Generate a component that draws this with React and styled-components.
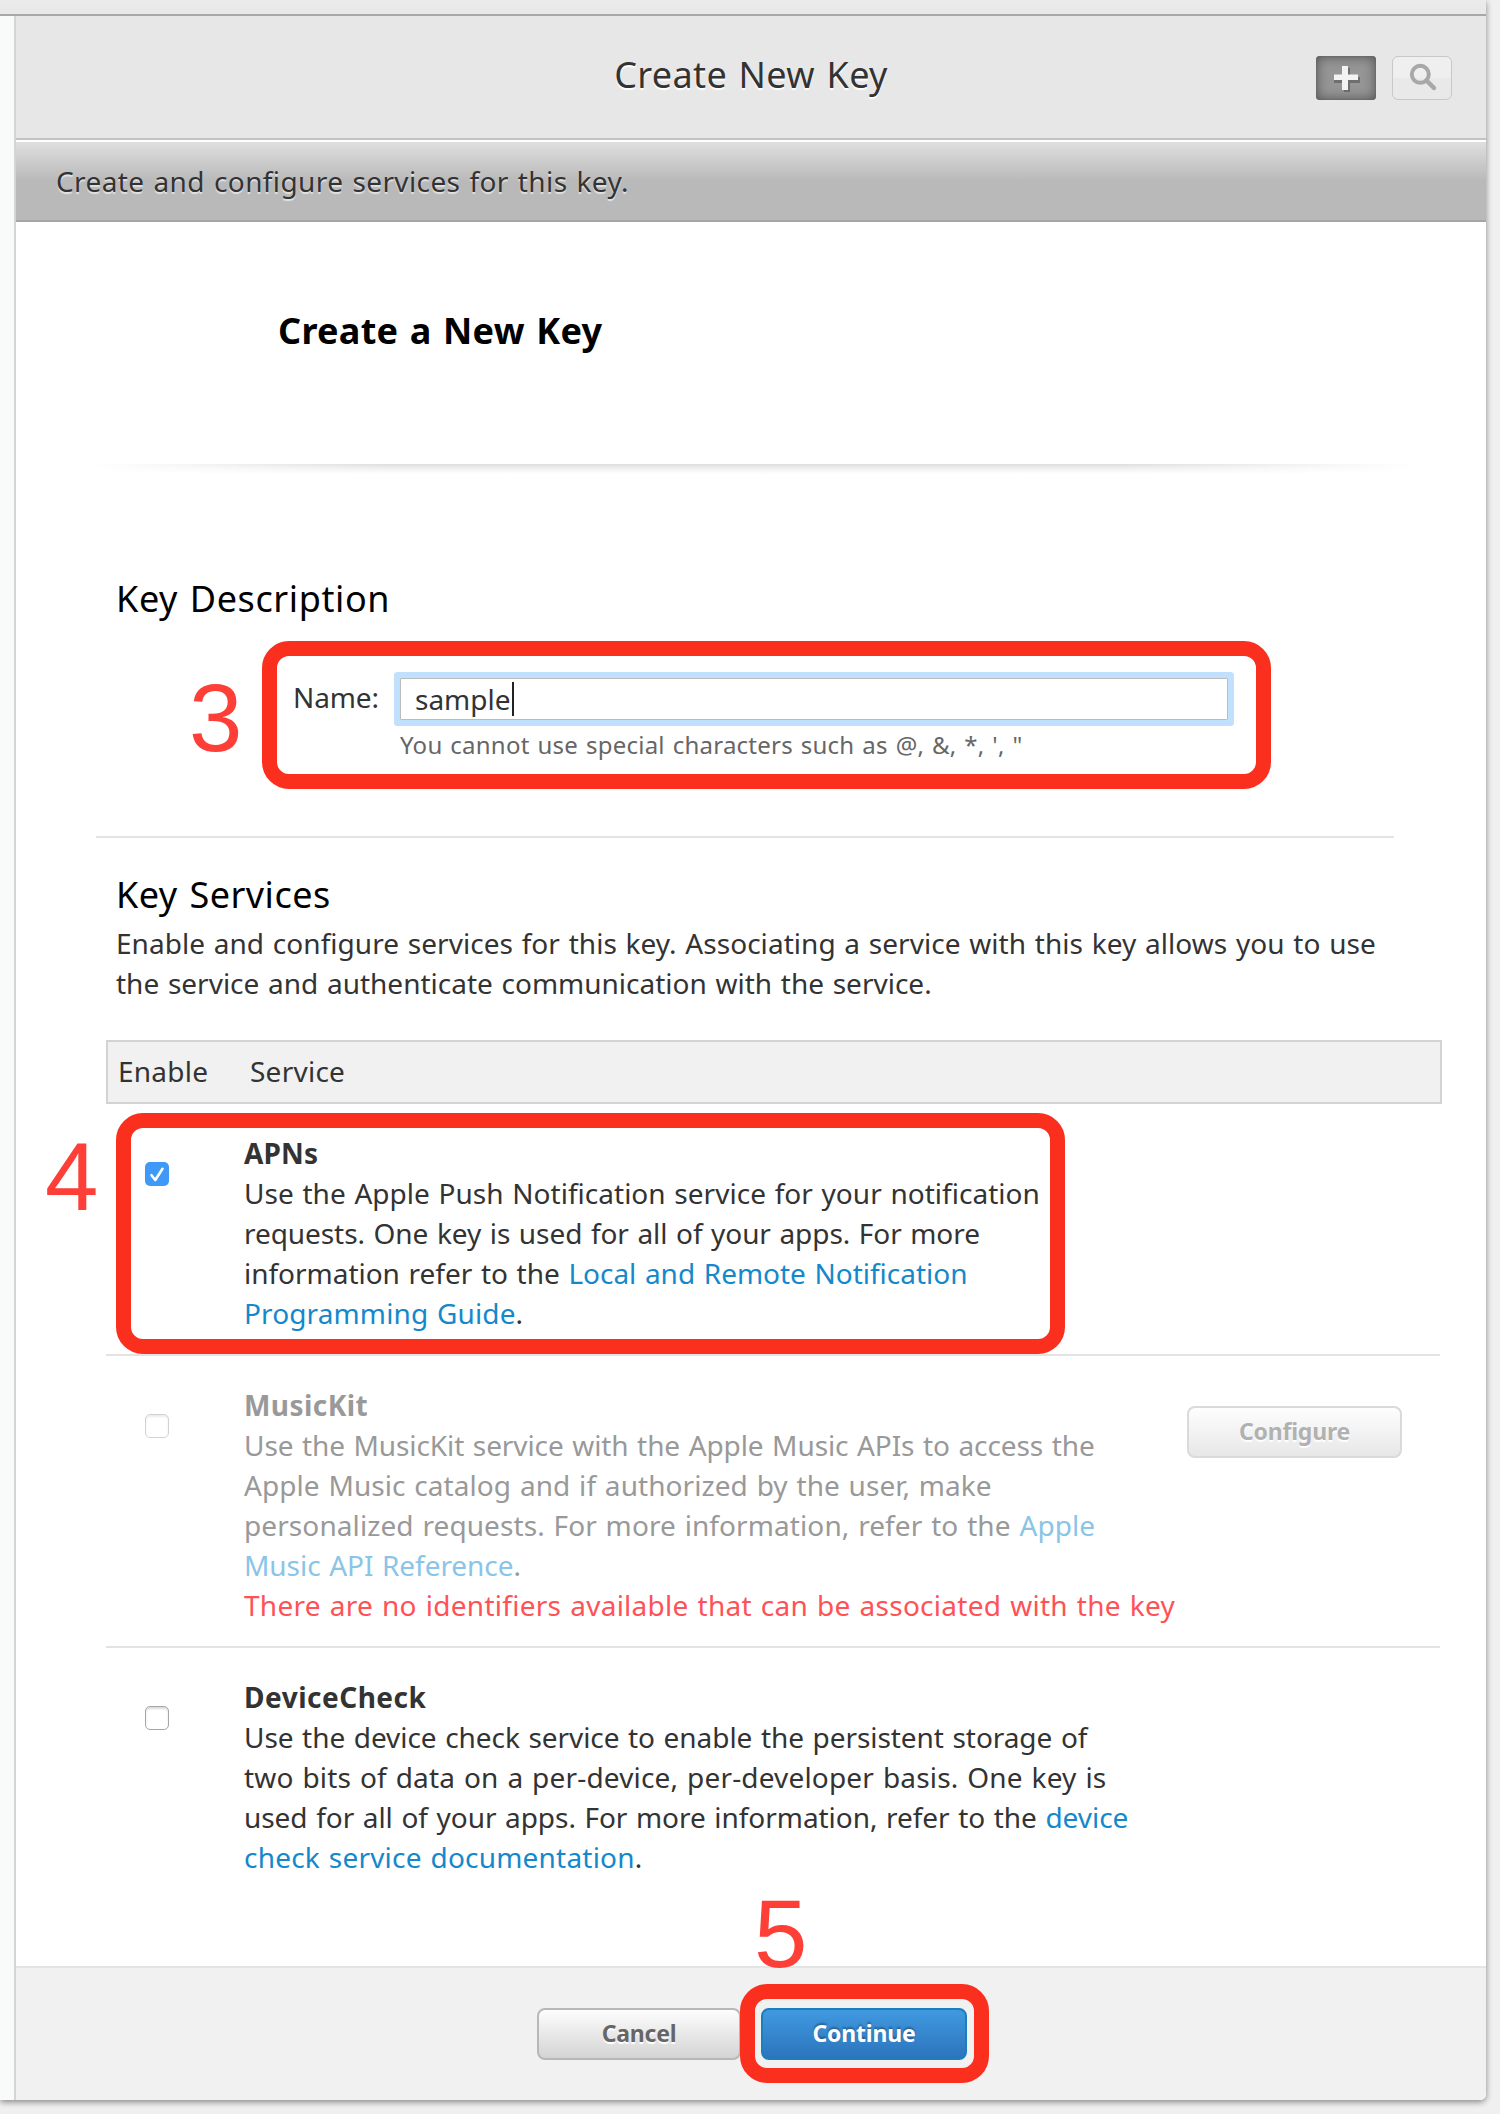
import React from "react";
import styled, { createGlobalStyle } from "styled-components";

const GlobalStyle = createGlobalStyle`
  * { box-sizing: border-box; }
  body {
    margin: 0;
    background: #f0f0f0;
    color: #333;
    font-family: "Noto Sans", "Open Sans", sans-serif;
    font-size: 28px;
    line-height: 40px;
    word-spacing: 1.4px;
  }
  h1, h2, h3, p { margin: 0; }
`;

const Page = styled.div`
  height: 2114px;
  overflow: hidden;
`;

const Window = styled.div`
  display: flex;
  flex-direction: column;
  width: 1486px;
  height: 2100px;
  border-bottom-right-radius: 6px;
  background: #f9fbfa;
  box-shadow: 0 2px 6px rgba(0, 0, 0, 0.45);
`;

const TopStrip = styled.div`
  height: 16px;
  flex: none;
  background: linear-gradient(#ebebeb, #e8e8e8);
  border-bottom: 2px solid #a8a8a8;
`;

const Panel = styled.main`
  flex: 1;
  display: flex;
  flex-direction: column;
  margin-left: 14px;
  border-left: 2px solid #d3d6d5;
  border-bottom-right-radius: 6px;
  background: #fff;
`;

const Header = styled.header`
  display: grid;
  grid-template-columns: 1fr auto 1fr;
  align-items: start;
  height: 124px;
  padding: 35px 34px 0;
  background: #e7e7e7;
  border-bottom: 2px solid #c3c3c3;
`;

const Title = styled.h1`
  grid-column: 2;
  font-size: 36px;
  line-height: 48px;
  font-weight: 400;
  letter-spacing: 0.37px;
  word-spacing: 1.8px;
  text-shadow: 0 2px 1px #fff;
`;

const Tools = styled.div`
  display: flex;
  justify-content: flex-end;
  gap: 16px;
  padding-top: 5px;
`;

const ToolButton = styled.button`
  display: flex;
  padding: 0;
  width: 60px;
  height: 44px;
  border-radius: ${(p) => (p.$active ? 4 : 6)}px;
  border: ${(p) => (p.$active ? "0" : "1px solid #c8c8c8")};
  background: ${(p) => (p.$active ? "#969696" : "linear-gradient(#efefef 0 50%, #e9e9e9 50% 100%)")};
  box-shadow: ${(p) => (p.$active ? "inset 0 0 12px 1px #555, inset 0 0 2px #666" : "none")};
`;

const SubHeader = styled.div`
  height: 82px;
  padding: 19px 40px 0;
  border-top: 2px solid #fff;
  border-bottom: 2px solid #a5a5a5;
  background: linear-gradient(#dfdfdf, #b9b9b9 50%, #b9b9b9);
  letter-spacing: 0.39px;
  text-shadow: 0 2px 1px rgba(255, 255, 255, 0.6);
`;

const Content = styled.div`
  position: relative;
  flex: 1;
  padding-top: 85px;
`;

const PageHeading = styled.h2`
  padding-left: 262px;
  height: 157px;
  font-size: 36px;
  line-height: 48px;
  letter-spacing: 0.28px;
  word-spacing: 1.8px;
  color: #000;
`;

const ShadowRule = styled.div`
  height: 10px;
  margin: 0 70px 101px 76px;
  background: linear-gradient(#dedede, #f0f0f0 45%, #fff);
  mask-image: linear-gradient(90deg, transparent, #000 22%, #000 78%, transparent);
`;

const SectionHeading = styled.h3`
  padding-left: 100px;
  font-size: 36px;
  line-height: 48px;
  font-weight: 400;
  letter-spacing: ${(p) => p.$track}px;
  word-spacing: 1.8px;
  color: #000;
`;

const NameForm = styled.div`
  display: grid;
  grid-template-columns: 107px 828px;
  margin: 54px 0 0 277px;
`;

const Label = styled.label`
  letter-spacing: -0.12px;
`;

const NameField = styled.div`
  display: flex;
  align-items: center;
  height: 42px;
  margin: 1px 0 9px;
  padding-left: 14px;
  border: 1px solid #bcbcbc;
  border-radius: 1px;
  background: #fff;
  box-shadow: 0 0 0 6px #c1e0fe;
`;

const Caret = styled.i`
  width: 2px;
  height: 34px;
  margin-left: 1px;
  background: #222;
`;

const Hint = styled.p`
  grid-column: 2;
  font-size: 24px;
  line-height: 32px;
  letter-spacing: 0.24px;
  color: #666;
`;

const Rule = styled.div`
  height: 2px;
  margin: 75px 92px 33px 80px;
  background: #e4e4e4;
`;

const Intro = styled.p`
  padding: 4px 0 37px 100px;
`;

const Line = styled.span`
  display: block;
  white-space: nowrap;
  letter-spacing: ${(p) => p.$track || 0}px;
`;

const TableHead = styled.div`
  display: flex;
  align-items: center;
  width: 1336px;
  height: 64px;
  margin-left: 90px;
  padding: 0 0 2px 10px;
  border: 2px solid #d3d3d3;
  background: #f1f1f1;
  letter-spacing: 0.25px;
`;

const HeadCell = styled.span`
  width: ${(p) => p.$width || "auto"};
`;

const Row = styled.div`
  display: flex;
  width: 1334px;
  margin-left: 90px;
  padding: 29px 38px 21px 39px;
  border-bottom: ${(p) => (p.$last ? "0" : "2px solid #e3e3e3")};
  color: ${(p) => (p.$disabled ? "#999" : "#333")};
`;

const Box = styled.span`
  display: flex;
  flex: none;
  width: 24px;
  height: 24px;
  margin: 29px 75px 0 0;
  border-radius: 5px;
  border: ${(p) => (p.$checked ? "0" : "1px solid #a6a6a6")};
  background: ${(p) => (p.$checked ? "#3f99f7" : "#fff")};
  box-shadow: ${(p) => (p.$checked ? "none" : "inset 0 2px 2px rgba(0,0,0,.14)")};
  opacity: ${(p) => (p.$disabled ? 0.5 : 1)};
`;

const ServiceText = styled.div`
  flex: 1;
  min-width: 0;
`;

const Name = styled.strong`
  display: block;
  letter-spacing: ${(p) => p.$track}px;
`;

const Link = styled.a`
  color: ${(p) => (p.$disabled ? "#8ac4e6" : "#1488cb")};
  text-decoration: none;
`;

const Warning = styled(Line)`
  color: #ff5257;
`;

const tones = {
  plain: { border: "#b8b8b8", fill: "linear-gradient(#fff, #d2d2d2)", text: "#666", shadow: "0 2px 1px #fff" },
  muted: { border: "#dadada", fill: "linear-gradient(#fff, #e6e6e6)", text: "#b1b1b1", shadow: "0 2px 1px #fff" },
  primary: { border: "#1a7fbd", fill: "linear-gradient(#419be1, #2b73bb)", text: "#fff", shadow: "0 -2px 2px rgba(0,0,0,.3)" },
};

const Button = styled.button`
  flex: none;
  width: ${(p) => p.$width}px;
  height: 52px;
  padding: 0 0 2px;
  margin-top: ${(p) => p.$top || 0}px;
  border: 2px solid ${(p) => tones[p.$tone].border};
  border-radius: 8px;
  background: ${(p) => tones[p.$tone].fill} border-box;
  color: ${(p) => tones[p.$tone].text};
  font: 700 23px/32px "Noto Sans", sans-serif;
  letter-spacing: -0.2px;
  text-shadow: ${(p) => tones[p.$tone].shadow};
`;

const Footer = styled.footer`
  position: relative;
  display: flex;
  gap: 20px;
  height: 134px;
  padding: 40px 0 0 521px;
  border-top: 2px solid #e4e4e4;
  border-bottom-right-radius: 6px;
  background: #f1f1f1;
`;

const Callout = styled.div`
  position: absolute;
  left: ${(p) => p.$x}px;
  top: ${(p) => p.$y}px;
  width: ${(p) => p.$w}px;
  height: ${(p) => p.$h}px;
  border: 15px solid #fb2f1e;
  border-radius: 27px;
  pointer-events: none;
`;

const Step = styled.span`
  position: absolute;
  left: ${(p) => p.$x}px;
  top: ${(p) => p.$y}px;
  font: 96px/96px "Liberation Sans", Arial, sans-serif;
  color: #fd3f38;
`;

export default function App() {
  return (
    <Page>
      <GlobalStyle />
      <Window>
        <TopStrip />
        <Panel>
          <Header>
            <Title>Create New Key</Title>
            <Tools>
              <ToolButton $active aria-label="Add">
                <svg width="60" height="44" viewBox="0 0 60 44">
                  <path d="M28 12h6v9h10v6H34v9h-6v-9H18v-6h10z" fill="#555" opacity=".6" />
                  <path d="M26 10h6v8.500h10v5.500H32v10h-6V24H18v-5.500h8z" fill="#f3f3f3" />
                </svg>
              </ToolButton>
              <ToolButton aria-label="Search">
                <svg width="58" height="42" viewBox="1 1 58 42" fill="none" stroke="#a8a8a8">
                  <circle cx="28.300" cy="18.300" r="8.500" strokeWidth="4" />
                  <path d="M34.500 24.500L42 32" strokeWidth="4.500" strokeLinecap="round" />
                </svg>
              </ToolButton>
            </Tools>
          </Header>
          <SubHeader>Create and configure services for this key.</SubHeader>

          <Content>
            <PageHeading>Create a New Key</PageHeading>
            <ShadowRule />

            <SectionHeading $track={0.6}>Key Description</SectionHeading>
            <NameForm>
              <Label>Name:</Label>
              <NameField>
                <span>sample</span>
                <Caret />
              </NameField>
              <Hint>You cannot use special characters such as @, &amp;, *, ', "</Hint>
            </NameForm>
            <Rule />

            <SectionHeading $track={0.5}>Key Services</SectionHeading>
            <Intro>
              <Line $track={0.04}>
                Enable and configure services for this key. Associating a service with this key allows you to use
              </Line>
              <Line>the service and authenticate communication with the service.</Line>
            </Intro>

            <TableHead>
              <HeadCell $width="132px">Enable</HeadCell>
              <HeadCell>Service</HeadCell>
            </TableHead>

            <Row>
              <Box $checked>
                <svg width="24" height="24" viewBox="0 0 24 24" fill="none" stroke="#fff" strokeWidth="2.600" strokeLinecap="round" strokeLinejoin="round">
                  <path d="M6.500 13.200L10.300 18L17.500 6.800" />
                </svg>
              </Box>
              <ServiceText>
                <Name $track={0.16}>APNs</Name>
                <Line $track={0.02}>Use the Apple Push Notification service for your notification</Line>
                <Line $track={-0.07}>requests. One key is used for all of your apps. For more</Line>
                <Line $track={-0.02}>
                  information refer to the <Link>Local and Remote Notification</Link>
                </Line>
                <Line $track={0.12}>
                  <Link>Programming Guide</Link>.
                </Line>
              </ServiceText>
            </Row>

            <Row $disabled>
              <Box $disabled />
              <ServiceText>
                <Name $track={0.44}>MusicKit</Name>
                <Line $track={-0.09}>Use the MusicKit service with the Apple Music APIs to access the</Line>
                <Line $track={0.07}>Apple Music catalog and if authorized by the user, make</Line>
                <Line $track={0.09}>
                  personalized requests. For more information, refer to the <Link $disabled>Apple</Link>
                </Line>
                <Line $track={-0.05}>
                  <Link $disabled>Music API Reference</Link>.
                </Line>
                <Warning $track={0.27}>There are no identifiers available that can be associated with the key</Warning>
              </ServiceText>
              <Button $tone="muted" $width={215} $top={21}>Configure</Button>
            </Row>

            <Row $last>
              <Box />
              <ServiceText>
                <Name $track={0.5}>DeviceCheck</Name>
                <Line $track={-0.06}>Use the device check service to enable the persistent storage of</Line>
                <Line $track={0.17}>two bits of data on a per-device, per-developer basis. One key is</Line>
                <Line $track={-0.05}>
                  used for all of your apps. For more information, refer to the <Link>device</Link>
                </Line>
                <Line $track={0.2}>
                  <Link>check service documentation</Link>.
                </Line>
              </ServiceText>
            </Row>

            <Step $x={173} $y={448}>3</Step>
            <Callout $x={246} $y={419} $w={1009} $h={148} />
            <Step $x={29} $y={907}>4</Step>
            <Callout $x={100} $y={891} $w={949} $h={241} />
          </Content>

          <Footer>
            <Button $tone="plain" $width={204}>Cancel</Button>
            <Button $tone="primary" $width={206}>Continue</Button>
            <Step $x={738} $y={-82}>5</Step>
            <Callout $x={724} $y={16} $w={249} $h={99} />
          </Footer>
        </Panel>
      </Window>
    </Page>
  );
}
